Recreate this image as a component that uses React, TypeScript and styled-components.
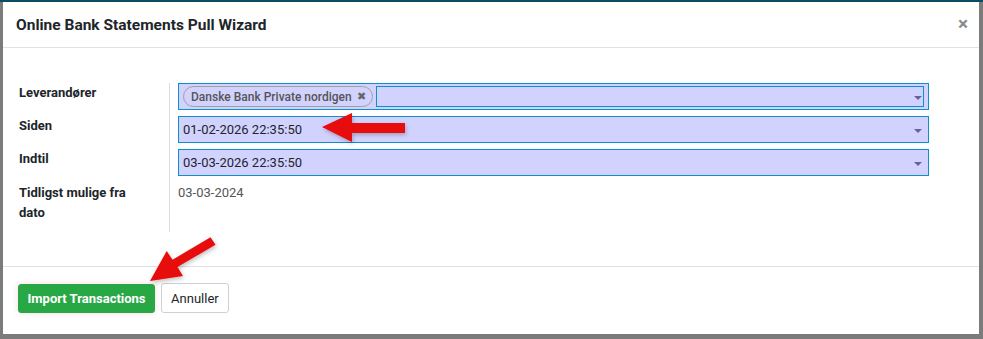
import React from "react";
import styled, { createGlobalStyle } from "styled-components";

const Global = createGlobalStyle`
  html, body { margin: 0; padding: 0; }
  body {
    background: #7b7b7b;
    font-family: Roboto, "Liberation Sans", Arial, sans-serif;
    font-size: 13px;
    color: #212529;
  }
`;

const Page = styled.div`
  position: relative;
  width: 983px;
  height: 339px;
  box-sizing: border-box;
  padding: 2px 4px 5px 3px;
  background: linear-gradient(#0f4c63 0 2px, #7b7b7b 2px);
  overflow: hidden;
`;

const Modal = styled.div`
  background: #fff;
  height: 100%;
  display: flex;
  flex-direction: column;
`;

const Header = styled.div`
  height: 45px;
  display: flex;
  align-items: center;
  justify-content: space-between;
  padding: 0 11px 0 13px;
  border-bottom: 1px solid #dee2e6;
`;

const Title = styled.h4`
  margin: 0;
  font-size: 15.5px;
  font-weight: 700;
  color: #212529;
`;

const Close = styled.span`
  font-size: 19px;
  font-weight: 700;
  color: #8a8a8a;
  line-height: 1;
  margin-top: -2px;
`;

const Body = styled.div`
  flex: 1;
  padding: 35px 50px 0 16px;
`;

const Grid = styled.div`
  display: grid;
  grid-template-columns: 151px 1fr;
`;

const Label = styled.div<{ $h: number }>`
  min-height: ${(p) => p.$h}px;
  font-weight: 700;
  font-size: 13px;
  line-height: 20px;
  border-right: 1px solid #dcdcdc;
  padding-right: 8px;
`;

const Cell = styled.div<{ $h: number }>`
  min-height: ${(p) => p.$h}px;
  padding-left: 8px;
`;

const Field = styled.div`
  position: relative;
  height: 27px;
  box-sizing: border-box;
  background: #d2d2ff;
  border: 1px solid #0b8fcd;
  display: flex;
  align-items: center;
  padding: 0 20px 0 4px;
  font-size: 13px;
  color: #212529;
`;

const Caret = styled.span`
  position: absolute;
  right: 6px;
  top: 50%;
  margin-top: -1px;
  border-left: 4px solid transparent;
  border-right: 4px solid transparent;
  border-top: 4px solid #6d5e9c;
`;

const Tag = styled.span`
  height: 21px;
  box-sizing: border-box;
  border: 1px solid #a0a0a0;
  border-radius: 11px;
  padding: 0 6px 0 7px;
  display: inline-flex;
  align-items: center;
  gap: 5px;
  font-size: 12px;
  font-weight: 500;
  color: #555;
  white-space: nowrap;
`;

const TagX = styled.span`
  font-size: 11px;
  color: #666;
`;

const Inner = styled.div`
  flex: 1;
  height: 21px;
  box-sizing: border-box;
  margin-left: 3px;
  margin-right: -16px;
  border: 1px solid #0b8fcd;
`;

const Plain = styled.div`
  color: #555;
  font-size: 13px;
  line-height: 20px;
`;

const Footer = styled.div`
  height: 68px;
  box-sizing: border-box;
  border-top: 1px solid #dee2e6;
  display: flex;
  align-items: center;
  gap: 6px;
  padding: 0 15px 5px;
`;

const Button = styled.button<{ $primary?: boolean }>`
  height: ${(p) => (p.$primary ? 29 : 30)}px;
  border-radius: 3px;
  font-family: inherit;
  font-size: 13px;
  padding: 0 ${(p) => (p.$primary ? 8.5 : 9)}px;
  font-weight: ${(p) => (p.$primary ? 700 : 400)};
  color: ${(p) => (p.$primary ? "#fff" : "#212529")};
  background: ${(p) => (p.$primary ? "#28a745" : "#fff")};
  border: 1px solid ${(p) => (p.$primary ? "#28a745" : "#d0d0d0")};
  box-shadow: ${(p) => (p.$primary ? "0 0 6px rgba(200,0,0,0.15)" : "none")};
`;

const Arrows = styled.svg`
  position: absolute;
  left: 0;
  top: 0;
  pointer-events: none;
`;

export default function App() {
  return (
    <>
      <Global />
      <Page>
        <Modal>
          <Header>
            <Title>Online Bank Statements Pull Wizard</Title>
            <Close>×</Close>
          </Header>
          <Body>
            <Grid>
              <Label $h={33}>Leverandører</Label>
              <Cell $h={33}>
                <Field>
                  <Tag>
                    Danske Bank Private nordigen <TagX>✖</TagX>
                  </Tag>
                  <Inner />
                  <Caret />
                </Field>
              </Cell>
              <Label $h={33}>Siden</Label>
              <Cell $h={33}>
                <Field>
                  01-02-2026 22:35:50
                  <Caret />
                </Field>
              </Cell>
              <Label $h={34}>Indtil</Label>
              <Cell $h={34}>
                <Field>
                  03-03-2026 22:35:50
                  <Caret />
                </Field>
              </Cell>
              <Label $h={49}>
                Tidligst mulige fra
                <br />
                dato
              </Label>
              <Cell $h={49}>
                <Plain>03-03-2024</Plain>
              </Cell>
            </Grid>
          </Body>
          <Footer>
            <Button $primary>Import Transactions</Button>
            <Button>Annuller</Button>
          </Footer>
        </Modal>
        <Arrows width="983" height="339" viewBox="0 0 983 339">
          <defs>
            <filter id="sh" x="-20%" y="-20%" width="140%" height="140%">
              <feDropShadow dx="1" dy="2" stdDeviation="2" floodColor="#000" floodOpacity="0.25" />
            </filter>
          </defs>
          <polygon
            filter="url(#sh)"
            fill="#e8090b"
            points="322,127 352,113 352,123 405,123 405,133 352,133 352,142"
          />
          <polygon
            filter="url(#sh)"
            fill="#e8090b"
            points="150,281 166.7,251 172.5,259.7 210.5,237.3 215.5,244.7 177.5,267.1 183,276"
          />
        </Arrows>
      </Page>
    </>
  );
}
